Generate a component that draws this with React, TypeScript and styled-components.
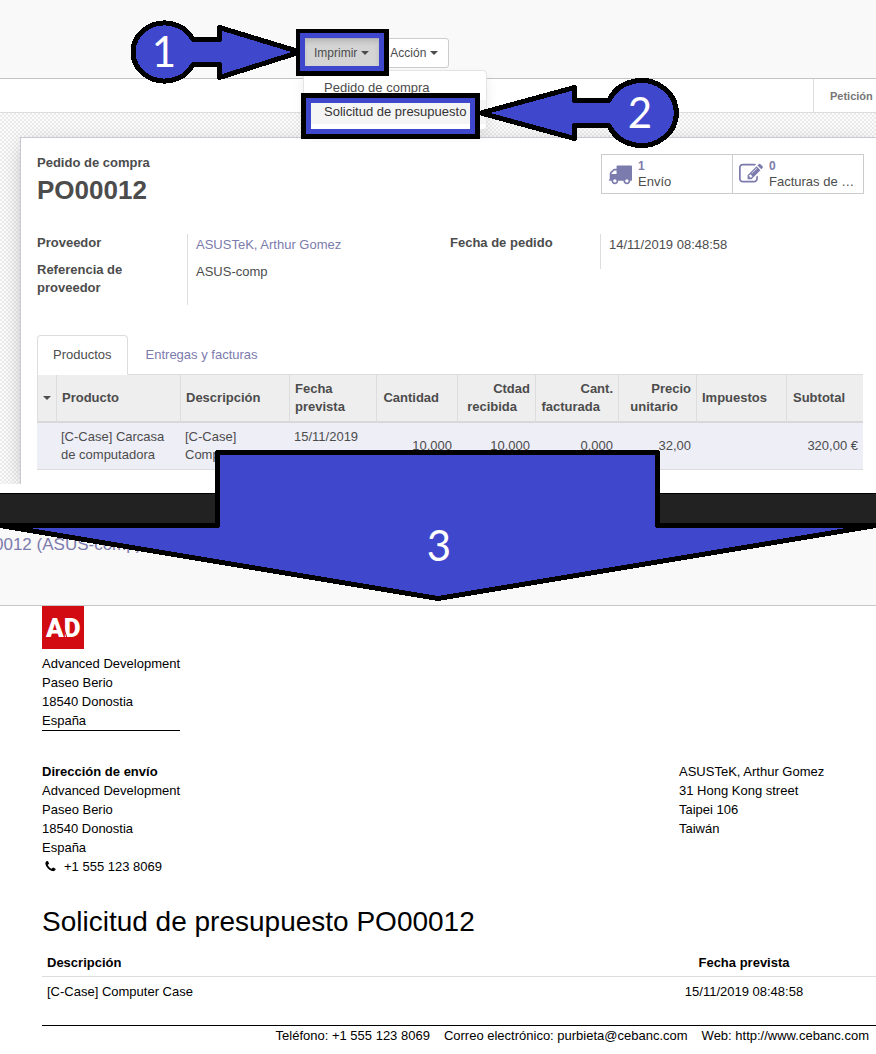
import React from "react";
import styled, { createGlobalStyle, css } from "styled-components";

const LINK = "#7c7bad";
const TEXT = "#4c4c4c";
const BLUE = "#3f48cc";

const GlobalStyle = createGlobalStyle`
  *, *::before, *::after { box-sizing: border-box; }
  body {
    margin: 0;
    background: #fff;
    color: ${TEXT};
    font: 13px/18px "Liberation Sans", Arial, sans-serif;
  }
  button { font-family: inherit; }
`;

const Page = styled.div`
  position: relative;
  overflow: hidden;
`;

const ControlPanel = styled.header`
  display: flex;
  align-items: flex-start;
  height: 79px;
  padding: 38px 0 0 303px;
  background: #f9f9f9;
  border-bottom: 1px solid #c4c4c8;
`;

const Dropdown = styled.div`
  position: relative;
`;

const MenuButton = styled.button<{ $open?: boolean; $last?: boolean }>`
  display: flex;
  align-items: center;
  gap: 4px;
  height: 30px;
  padding: 0 10px;
  border: 1px solid #ccc;
  border-radius: ${(p) => (p.$last ? "0 3px 3px 0" : "3px 0 0 3px")};
  background: #fff;
  color: ${TEXT};
  font-size: 12px;
  line-height: 18px;
  ${(p) => p.$last && css`margin-left: -1px;`}
  ${(p) =>
    p.$open &&
    css`
      background: #d4d4d4;
      border-color: #adadad;
      box-shadow: inset 0 3px 5px rgba(0, 0, 0, 0.125);
    `}
`;

const Caret = styled.span`
  border-top: 4px solid ${TEXT};
  border-left: 4px solid transparent;
  border-right: 4px solid transparent;
`;

const Menu = styled.ul`
  position: absolute;
  top: 100%;
  left: 0;
  z-index: 2;
  width: 184px;
  margin: 2px 0 0;
  padding: 5px 0;
  list-style: none;
  background: #fff;
  border: 1px solid #e4e4e4;
  border-radius: 0 4px 4px 4px;
  box-shadow: 0 6px 12px rgba(0, 0, 0, 0.08);
`;

const MenuLink = styled.a<{ $active?: boolean }>`
  display: block;
  padding: 3px 20px;
  color: ${(p) => (p.$active ? "#333" : TEXT)};
  background: ${(p) => (p.$active ? "#f5f5f5" : "transparent")};
  text-decoration: none;
  white-space: nowrap;
`;

const StatusBar = styled.div`
  display: flex;
  justify-content: flex-end;
  height: 34px;
  border-bottom: 1px solid #ddd;
`;

const Stage = styled.span`
  width: 63px;
  padding-left: 16px;
  border-left: 1px solid #ddd;
  color: #777;
  font-size: 11px;
  font-weight: bold;
  line-height: 34px;
`;

const FormView = styled.main`
  padding: 24px 0 0 20px;
  background: repeating-conic-gradient(#eaeaea 0 25%, #fcfcfc 0 50%) 0 0 / 4px 4px;
  overflow: hidden;
`;

const Sheet = styled.section`
  padding: 16px 13px 14px 16px;
  background: #fff;
  border-top: 1px solid #c8c8d3;
  border-left: 1px solid #c8c8d3;
  box-shadow: 0 5px 20px -5px rgba(0, 0, 0, 0.3);
`;

const SheetHead = styled.div`
  display: flex;
  justify-content: space-between;
  align-items: flex-start;
`;

const Kind = styled.div`
  font-weight: bold;
`;

const OrderName = styled.h1`
  margin: 0;
  font-size: 26px;
  line-height: 36px;
`;

const StatBox = styled.div`
  display: flex;
  border: 1px solid #ccc;
  margin-right: -1px;
`;

const StatButton = styled.button`
  display: flex;
  align-items: center;
  gap: 6px;
  width: 130px;
  height: 38px;
  padding: 0 6px;
  border: 0;
  background: #fff;
  color: ${TEXT};
  font-size: 13px;
  line-height: 15px;
  text-align: left;
  & + & {
    width: 131px;
    border-left: 1px solid #ccc;
  }
  svg {
    flex: none;
    fill: ${LINK};
  }
`;

const StatValue = styled.strong`
  display: block;
  color: ${LINK};
  font-size: 12px;
`;

const Groups = styled.div`
  display: grid;
  grid-template-columns: 1fr 1fr;
  align-items: start;
  margin: 26px 0 30px;
`;

const FieldList = styled.dl`
  display: grid;
  grid-template-columns: 150px 1fr;
  margin: 0;
`;

const FieldLabel = styled.dt`
  padding: 0 40px 8px 0;
  font-weight: bold;
`;

const FieldValue = styled.dd<{ $tall?: boolean }>`
  min-height: ${(p) => (p.$tall ? "35px" : "27px")};
  margin: 0;
  padding: 2px 0 0 8px;
  border-left: 1px solid #ddd;
`;

const TextLink = styled.a`
  color: ${LINK};
  text-decoration: none;
`;

const Tabs = styled.div`
  display: flex;
  gap: 2px;
  border-bottom: 1px solid #ddd;
`;

const Tab = styled.button<{ $active?: boolean }>`
  margin-bottom: -1px;
  padding: 10px 15px;
  border: 1px solid transparent;
  border-radius: 4px 4px 0 0;
  background: none;
  color: ${LINK};
  font-size: 13px;
  line-height: 18px;
  ${(p) =>
    p.$active &&
    css`
      border-color: #ddd #ddd #fff;
      background: #fff;
      color: ${TEXT};
    `}
`;

const Lines = styled.table`
  width: 100%;
  table-layout: fixed;
  border-collapse: separate;
  border-spacing: 0;
`;

const LineHead = styled.th<{ $right?: boolean }>`
  padding: 5px;
  background: #eee;
  border-left: 1px solid #ddd;
  border-bottom: 2px solid #d8d8d8;
  text-align: ${(p) => (p.$right ? "right" : "left")};
`;

const SortLabel = styled.span`
  padding-right: 13px;
`;

const LineCell = styled.td<{ $right?: boolean }>`
  padding: 5px;
  background: #eeeef7;
  border-bottom: 1px solid #ddd;
  text-align: ${(p) => (p.$right ? "right" : "left")};
`;

const CaretCell = styled(LineHead)`
  padding: 0 0 0 5px;
  ${Caret} { display: block; width: 8px; }
`;

const DarkBar = styled.div`
  height: 33px;
  margin-top: 9px;
  background: #222;
  border-top: 1px solid #000;
`;

const PreviewBar = styled.nav`
  height: 80px;
  padding-top: 9px;
  background: #f9f9f9;
  border-bottom: 1px solid #c8c8c8;
  a {
    margin-left: -6px;
    font-size: 17px;
    line-height: 20px;
  }
`;

const Report = styled.article`
  padding-left: 42px;
  color: #000;
  line-height: 19px;
`;

const Logo = styled.svg`
  display: block;
  margin-bottom: 5px;
`;

const Address = styled.address`
  font-style: normal;
  white-space: nowrap;
`;

const CompanyAddress = styled(Address)`
  width: fit-content;
  border-bottom: 1px solid #000;
`;

const Parties = styled.div`
  display: grid;
  grid-template-columns: 1fr 197px;
  margin: 31px 0 29px;
`;

const Phone = styled.div`
  display: flex;
  align-items: center;
  gap: 7px;
  padding-left: 2px;
`;

const ReportTitle = styled.h2`
  margin: 0 0 10px;
  font-size: 28px;
  font-weight: normal;
  line-height: 34px;
`;

const ReportTable = styled.table`
  width: 100%;
  border-spacing: 0;
  th, td {
    padding: 5px;
    text-align: left;
  }
  th {
    padding: 4px 5px;
    border-bottom: 1px solid #ddd;
  }
  th:last-child, td:last-child {
    width: 264px;
    text-align: center;
  }
`;

const ReportFooter = styled.footer`
  display: flex;
  justify-content: flex-end;
  gap: 14px;
  margin-top: 19px;
  padding: 0 7px 9px 0;
  border-top: 1px solid #000;
  white-space: nowrap;
`;

const Annotations = styled.svg`
  position: absolute;
  top: 0;
  left: 0;
  z-index: 3;
  pointer-events: none;
  text {
    fill: #fff;
    font-family: Lato, "Noto Sans", sans-serif;
    font-size: 42px;
    text-anchor: middle;
  }
`;

const Truck = () => (
  <svg width="24" height="24" viewBox="0 0 1792 1792" aria-hidden="true">
    <path d="M640 1408q0-52-38-90t-90-38-90 38-38 90 38 90 90 38 90-38 38-90zm-384-512h384v-256h-158q-13 0-22 9l-195 195q-9 9-9 22v30zm1280 512q0-52-38-90t-90-38-90 38-38 90 38 90 90 38 90-38 38-90zm256-1088v1024q0 15-4 26.500t-13.500 18.500-16.500 11.500-23.500 6-22.500 2-25.500 0-22.500-.5q0 106-75 181t-181 75-181-75-75-181h-384q0 106-75 181t-181 75-181-75-75-181h-64q-3 0-22.500.5t-25.500 0-22.500-2-23.500-6-16.500-11.500-13.500-18.500-4-26.500q0-26 19-45t45-19v-320q0-8-.5-35t0-38 2.500-34.500 6.500-37 14-30.500 22.500-30l198-198q19-19 50.500-32t58.500-13h160v-192q0-26 19-45t45-19h1024q26 0 45 19t19 45z" />
  </svg>
);

const Edit = () => (
  <svg width="24" height="24" viewBox="0 0 1792 1792" aria-hidden="true">
    <path d="M888 1184l116-116-152-152-116 116v56h96v96h56zm440-720q-16-16-33 1l-350 350q-17 17-1 33t33-1l350-350q17-17 1-33zm80 594v190q0 119-84.500 203.500t-203.500 84.500h-832q-119 0-203.500-84.500t-84.500-203.500v-832q0-119 84.500-203.500t203.500-84.500h832q63 0 117 25 15 7 18 23 3 17-9 29l-49 49q-14 14-32 8-23-6-45-6h-832q-66 0-113 47t-47 113v832q0 66 47 113t113 47h832q66 0 113-47t47-113v-126q0-13 9-22l64-64q15-15 35-7t20 29zm-96-738l288 288-672 672h-288v-288zm444 132l-92 92-288-288 92-92q28-28 68-28t68 28l152 152q28 28 28 68t-28 68z" />
  </svg>
);

const Handset = () => (
  <svg width="13" height="13" viewBox="0 0 1792 1792" aria-hidden="true">
    <path d="M1600 1240q0 27-10 70.500t-21 68.500q-21 50-122 106-94 51-186 51-27 0-53-3.500t-57.500-12.500-47-14.500-55.500-20.500-49-18q-98-35-175-83-127-79-264-216t-216-264q-48-77-83-175-3-9-18-49t-20.500-55.500-14.500-47-12.500-57.500-3.500-53q0-92 51-186 56-101 106-122 25-11 68.500-21t70.500-10q14 0 21 3 18 6 53 76 11 19 30 54t35 63.500 31 53.500q3 4 17.500 25t21.500 35.500 7 28.500q0 20-28.500 50t-62 55-62 53-28.500 46q0 9 5 22.500t8.500 20.500 14 24 11.500 19q76 137 174 235t235 174q2 1 19 11.500t24 14 20.500 8.500 22.500 5q18 0 46-28.500t53-62 55-62 50-28.500q14 0 28.500 7t35.500 21.500 25 17.500q25 15 53.500 31t63.500 35 54 30q70 35 76 53 3 7 3 21z" />
  </svg>
);

const columns = [
  { name: "Producto", width: 124 },
  { name: "Descripción", width: 109 },
  { name: "Fecha prevista", width: 87 },
  { name: "Cantidad", width: 81, right: true },
  { name: "Ctdad recibida", width: 78, right: true },
  { name: "Cant. facturada", width: 83, right: true },
  { name: "Precio unitario", width: 78, right: true },
  { name: "Impuestos", width: 90 },
  { name: "Subtotal", width: 77, right: true },
];

const line = [
  "[C-Case] Carcasa de computadora",
  "[C-Case] Computer Case",
  "15/11/2019 08:48:58",
  "10.000",
  "10.000",
  "0.000",
  "32,00",
  "",
  "320,00 €",
];

const Steps = () => (
  <Annotations width="876" height="610" viewBox="0 0 876 610">
    <g fill={BLUE} stroke="#000" strokeWidth="5" strokeLinejoin="round" shapeRendering="crispEdges">
      <path d="M193 39.500H219.500V27.500L300 52L219.500 77.500V64.500H193A31.500 29 0 1 1 193 39.500Z" />
      <path d="M609 100.500H574.500V87.500L481 113L574.500 138.500V125.500H609A35 32.500 0 1 0 609 100.500Z" />
      <path d="M0 525.500H217.500V452.500H657.500V525.500H876L438 598.500Z" />
    </g>
    <g fillRule="evenodd" shapeRendering="crispEdges">
      <path d="M296 29H389V76H296ZM305 38V66H379V38Z" />
      <path fill={BLUE} d="M300 33H384V71H300ZM305 38V66H379V38Z" />
      <path d="M301 93H480V139H301ZM311 103V129H470V103Z" />
      <path fill={BLUE} d="M306 98H475V134H306ZM311 103V129H470V103Z" />
    </g>
    <text x="164" y="67">1</text>
    <text x="640" y="128">2</text>
    <text x="439" y="561">3</text>
  </Annotations>
);

export default function App() {
  return (
    <Page>
      <GlobalStyle />
      <ControlPanel>
        <Dropdown>
          <MenuButton $open type="button" aria-expanded="true">
            Imprimir <Caret />
          </MenuButton>
          <Menu>
            <li>
              <MenuLink href="#pedido">Pedido de compra</MenuLink>
            </li>
            <li>
              <MenuLink href="#solicitud" $active>
                Solicitud de presupuesto
              </MenuLink>
            </li>
          </Menu>
        </Dropdown>
        <MenuButton $last type="button">
          Acción <Caret />
        </MenuButton>
      </ControlPanel>
      <StatusBar>
        <Stage>Petición</Stage>
      </StatusBar>

      <FormView>
        <Sheet>
          <SheetHead>
            <div>
              <Kind>Pedido de compra</Kind>
              <OrderName>PO00012</OrderName>
            </div>
            <StatBox>
              <StatButton type="button">
                <Truck />
                <span>
                  <StatValue>1</StatValue>
                  Envío
                </span>
              </StatButton>
              <StatButton type="button">
                <Edit />
                <span>
                  <StatValue>0</StatValue>
                  Facturas de …
                </span>
              </StatButton>
            </StatBox>
          </SheetHead>

          <Groups>
            <FieldList>
              <FieldLabel>Proveedor</FieldLabel>
              <FieldValue>
                <TextLink href="#proveedor">ASUSTeK, Arthur Gomez</TextLink>
              </FieldValue>
              <FieldLabel>Referencia de proveedor</FieldLabel>
              <FieldValue>ASUS-comp</FieldValue>
            </FieldList>
            <FieldList>
              <FieldLabel>Fecha de pedido</FieldLabel>
              <FieldValue $tall>14/11/2019 08:48:58</FieldValue>
            </FieldList>
          </Groups>

          <Tabs role="tablist">
            <Tab $active type="button" role="tab" aria-selected="true">
              Productos
            </Tab>
            <Tab type="button" role="tab" aria-selected="false">
              Entregas y facturas
            </Tab>
          </Tabs>
          <Lines>
            <colgroup>
              <col width={19} />
              {columns.map((c) => (
                <col key={c.name} width={c.width} />
              ))}
            </colgroup>
            <thead>
              <tr>
                <CaretCell>
                  <Caret />
                </CaretCell>
                {columns.map((c) => (
                  <LineHead key={c.name} $right={c.right}>
                    {c.right ? <SortLabel>{c.name}</SortLabel> : c.name}
                  </LineHead>
                ))}
              </tr>
            </thead>
            <tbody>
              <tr>
                <LineCell />
                {line.map((value, i) => (
                  <LineCell key={columns[i].name} $right={columns[i].right}>
                    {value}
                  </LineCell>
                ))}
              </tr>
            </tbody>
          </Lines>
        </Sheet>
      </FormView>

      <DarkBar />
      <PreviewBar>
        <TextLink href="#pedido-origen">0012 (ASUS-comp)</TextLink>
      </PreviewBar>

      <Report>
        <Logo width="42" height="43" viewBox="0 0 42 43" role="img" aria-label="AD">
          <rect width="42" height="43" fill="#d20a11" />
          <text x="4" y="31" fill="#fff" fontFamily="Roboto, sans-serif" fontWeight="900" fontSize="26">
            AD
          </text>
          <path d="M18 10L25 32" stroke="#d20a11" strokeWidth="1" />
        </Logo>
        <CompanyAddress>
          Advanced Development
          <br />
          Paseo Berio
          <br />
          18540 Donostia
          <br />
          España
        </CompanyAddress>
        <Parties>
          <Address>
            <strong>Dirección de envío</strong>
            <br />
            Advanced Development
            <br />
            Paseo Berio
            <br />
            18540 Donostia
            <br />
            España
            <Phone>
              <Handset />
              +1 555 123 8069
            </Phone>
          </Address>
          <Address>
            ASUSTeK, Arthur Gomez
            <br />
            31 Hong Kong street
            <br />
            Taipei 106
            <br />
            Taiwán
          </Address>
        </Parties>
        <ReportTitle>Solicitud de presupuesto PO00012</ReportTitle>
        <ReportTable>
          <thead>
            <tr>
              <th>Descripción</th>
              <th>Fecha prevista</th>
            </tr>
          </thead>
          <tbody>
            <tr>
              <td>[C-Case] Computer Case</td>
              <td>15/11/2019 08:48:58</td>
            </tr>
          </tbody>
        </ReportTable>
        <ReportFooter>
          <span>Teléfono: +1 555 123 8069</span>
          <span>Correo electrónico: purbieta@cebanc.com</span>
          <span>Web: http://www.cebanc.com</span>
        </ReportFooter>
      </Report>
      <Steps />
    </Page>
  );
}
